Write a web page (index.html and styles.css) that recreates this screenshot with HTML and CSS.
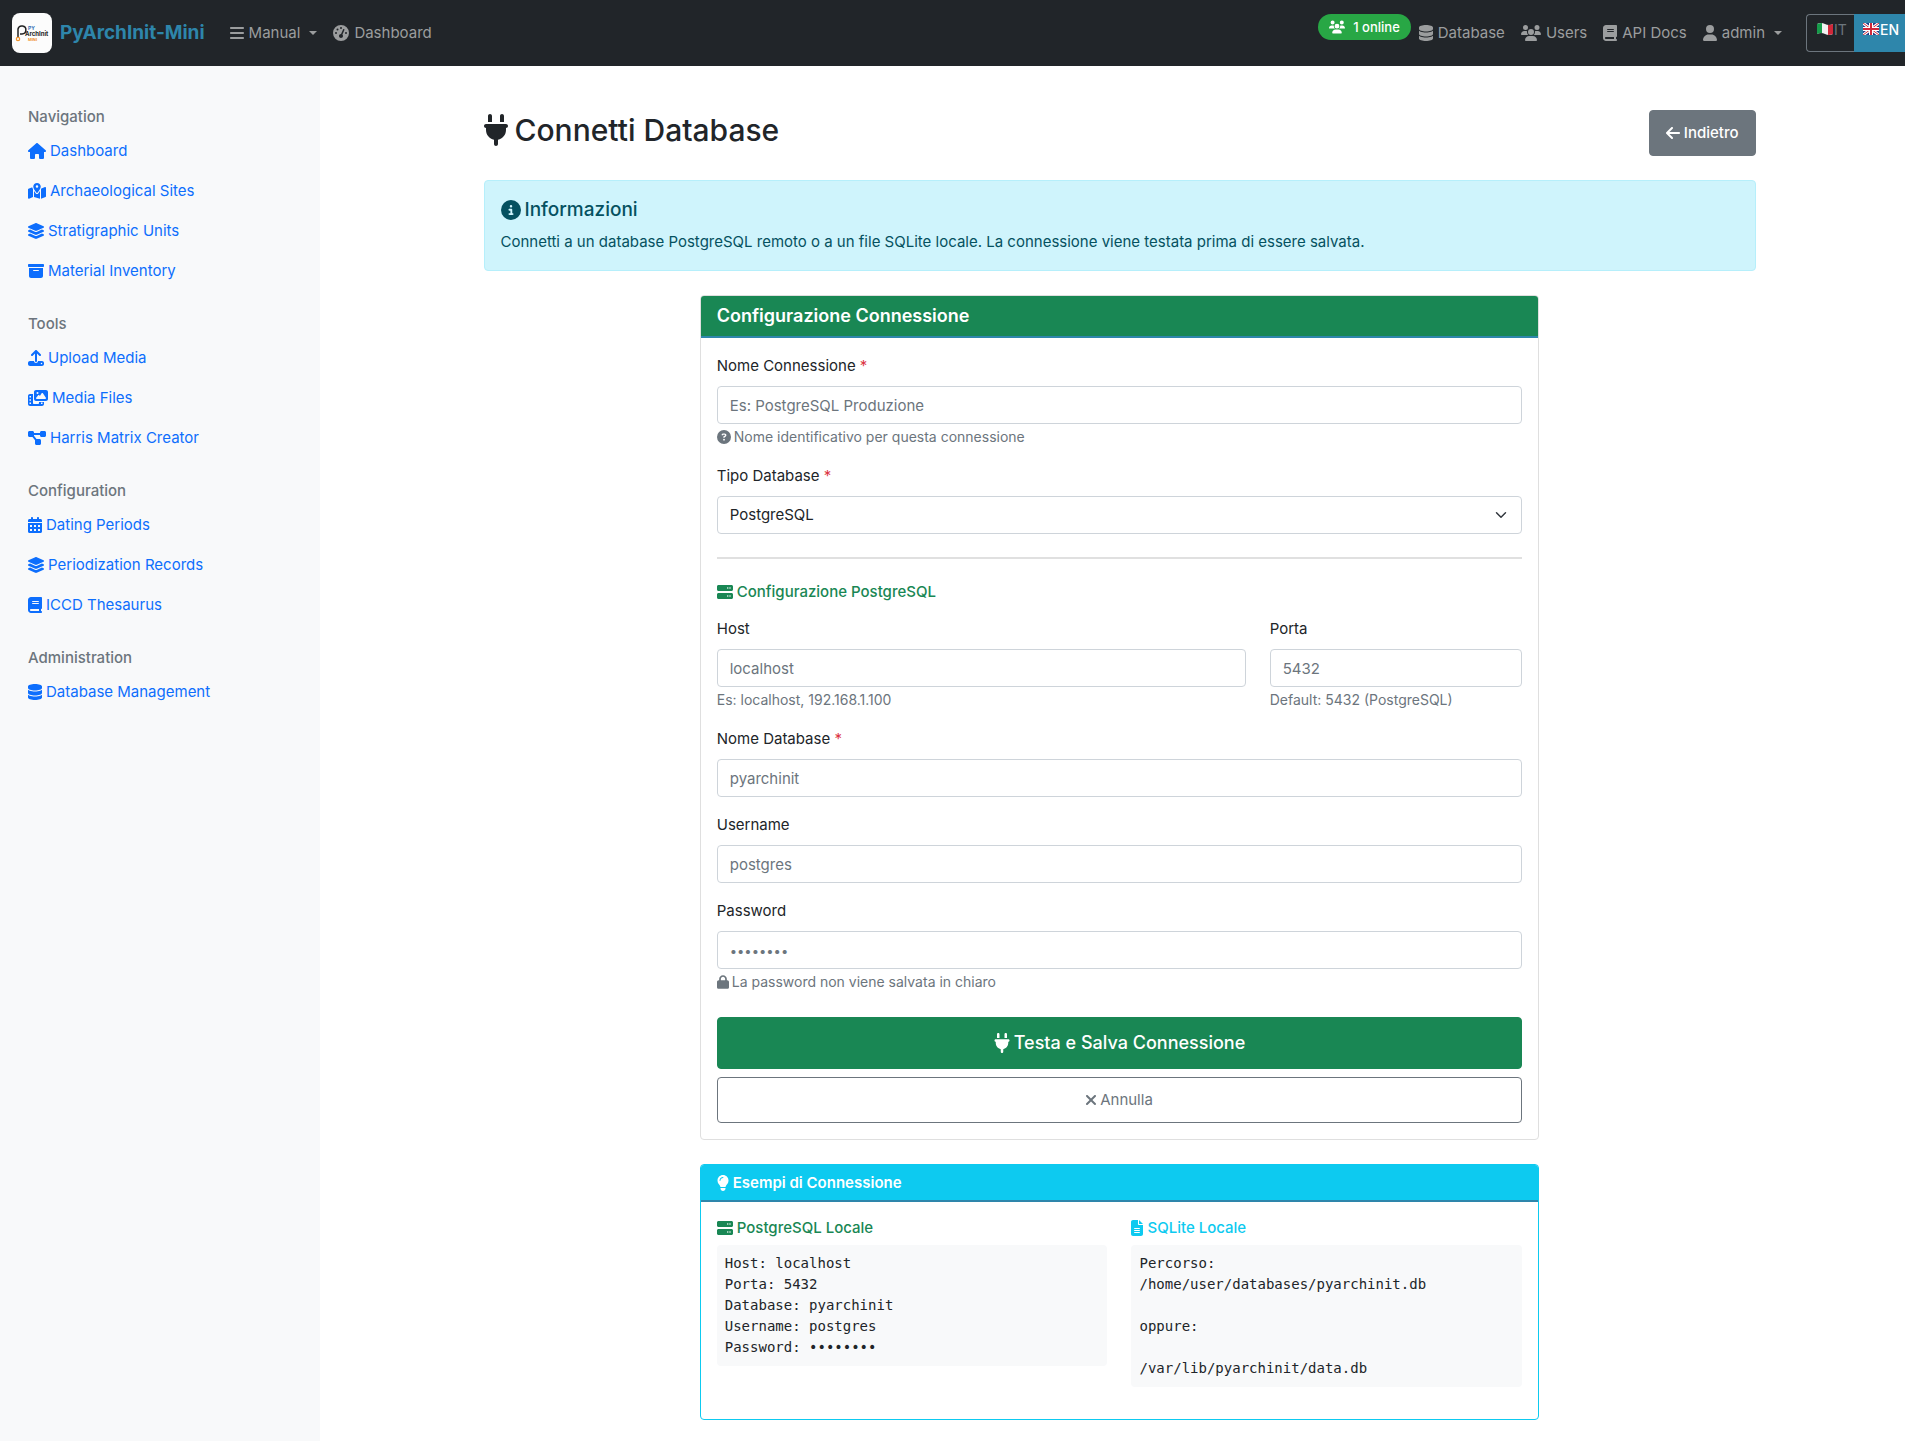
FILE: index.html
```html
<!DOCTYPE html>
<html lang="it">
<head>
<meta charset="utf-8">
<meta name="viewport" content="width=device-width, initial-scale=1">
<title>Connetti Database - PyArchInit-Mini</title>
<link rel="stylesheet" href="styles.css">
</head>
<body>
<svg class="sprite" aria-hidden="true">
  <symbol id="bars" viewBox="0 0 448 512"><path d="M0 96C0 78.3 14.3 64 32 64H416c17.7 0 32 14.3 32 32s-14.3 32-32 32H32C14.3 128 0 113.7 0 96zM0 256c0-17.7 14.3-32 32-32H416c17.7 0 32 14.3 32 32s-14.3 32-32 32H32c-17.7 0-32-14.3-32-32zM448 416c0 17.7-14.3 32-32 32H32c-17.7 0-32-14.3-32-32s14.3-32 32-32H416c17.7 0 32 14.3 32 32z"/></symbol>
  <symbol id="gauge" viewBox="0 0 512 512"><path fill-rule="evenodd" d="M0 256a256 256 0 1 1 512 0A256 256 0 1 1 0 256zM288 96a32 32 0 1 0 -64 0 32 32 0 1 0 64 0zM256 416c35.300 0 64-28.700 64-64c0-17.400-6.900-33.100-18.100-44.600L366 161.700c5.300-12.100-.2-26.300-12.300-31.600s-26.300 .2-31.600 12.300L257.900 288c-.6 0-1.300 0-1.900 0c-35.300 0-64 28.700-64 64s28.700 64 64 64zM176 144a32 32 0 1 0 -64 0 32 32 0 1 0 64 0zM96 288a32 32 0 1 0 0-64 32 32 0 1 0 0 64zm352-32a32 32 0 1 0 -64 0 32 32 0 1 0 64 0z"/></symbol>
  <symbol id="database" viewBox="0 0 448 512"><path d="M448 80v48c0 44.200-100.300 80-224 80S0 172.200 0 128V80C0 35.800 100.300 0 224 0S448 35.800 448 80zM393.200 214.700c20.800-7.400 39.900-16.900 54.800-28.600V288c0 44.200-100.300 80-224 80S0 332.200 0 288V186.100c14.900 11.800 34 21.200 54.800 28.600C99.700 230.700 159.500 240 224 240s124.300-9.300 169.200-25.300zM0 346.100c14.900 11.800 34 21.200 54.800 28.600C99.700 390.700 159.500 400 224 400s124.300-9.300 169.200-25.300c20.800-7.400 39.900-16.900 54.800-28.600V432c0 44.200-100.300 80-224 80S0 476.200 0 432V346.100z"/></symbol>
  <symbol id="users" viewBox="0 0 640 512"><path d="M144 0a80 80 0 1 1 0 160A80 80 0 1 1 144 0zM512 0a80 80 0 1 1 0 160A80 80 0 1 1 512 0zM0 298.700C0 239.800 47.800 192 106.700 192h42.700c15.900 0 31 3.500 44.600 9.700c-1.300 7.200-1.900 14.700-1.900 22.300c0 38.200 16.800 72.500 43.300 96c-.2 0-.4 0-.7 0H21.300C9.600 320 0 310.400 0 298.700zM405.300 320c-.2 0-.4 0-.7 0c26.600-23.500 43.300-57.800 43.300-96c0-7.600-.7-15-1.900-22.300c13.600-6.300 28.700-9.700 44.600-9.700h42.700C592.200 192 640 239.800 640 298.700c0 11.800-9.600 21.300-21.300 21.300H405.300zM224 224a96 96 0 1 1 192 0 96 96 0 1 1 -192 0zM128 485.300C128 411.700 187.700 352 261.300 352H378.700C452.300 352 512 411.700 512 485.300c0 14.700-11.900 26.700-26.700 26.700H154.700c-14.700 0-26.700-11.900-26.700-26.700z"/></symbol>
  <symbol id="book" viewBox="0 0 448 512"><path fill-rule="evenodd" d="M96 0C43 0 0 43 0 96V416c0 53 43 96 96 96H384h32c17.700 0 32-14.300 32-32s-14.300-32-32-32V384c17.700 0 32-14.300 32-32V32c0-17.700-14.300-32-32-32H384 96zm0 384H352v64H96c-17.700 0-32-14.300-32-32s14.300-32 32-32zm32-240c0-8.800 7.200-16 16-16H336c8.800 0 16 7.200 16 16s-7.200 16-16 16H144c-8.800 0-16-7.200-16-16zm16 48H336c8.800 0 16 7.200 16 16s-7.200 16-16 16H144c-8.800 0-16-7.200-16-16s7.200-16 16-16z"/></symbol>
  <symbol id="user" viewBox="0 0 448 512"><path d="M224 256A128 128 0 1 0 224 0a128 128 0 1 0 0 256zm-45.700 48C79.800 304 0 383.800 0 482.300C0 498.700 13.300 512 29.700 512H418.300c16.400 0 29.700-13.300 29.700-29.700C448 383.800 368.200 304 269.700 304H178.300z"/></symbol>
  <symbol id="home" viewBox="0 0 576 512"><path d="M575.800 255.500c0 18-15 32.100-32 32.100h-32l.7 160.200c0 2.700-.2 5.400-.5 8.100V472c0 22.100-17.900 40-40 40H456c-1.100 0-2.200 0-3.300-.1c-1.400 .1-2.800 .1-4.200 .1H416 392c-22.100 0-40-17.900-40-40V448 384c0-17.700-14.300-32-32-32H256c-17.700 0-32 14.300-32 32v64 24c0 22.100-17.900 40-40 40H160 128.100c-1.500 0-3-.1-4.500-.2c-1.200 .1-2.400 .2-3.600 .2H104c-22.100 0-40-17.900-40-40V360c0-.9 0-1.900 .1-2.800V287.600H32c-18 0-32-14-32-32.100c0-9 3-17 10-24L266.400 8c7-7 15-8 22-8s15 2 21 7L564.800 231.500c8 7 12 15 11 24z"/></symbol>
  <symbol id="map" viewBox="0 0 576 512"><path fill-rule="evenodd" d="M408 120c0 54.600-73.100 151.900-105.200 192c-7.700 9.600-22 9.600-29.600 0C241.100 271.900 168 174.600 168 120C168 53.700 221.700 0 288 0s120 53.700 120 120zm8 80.400c3.500-6.900 6.700-13.800 9.600-20.600c.5-1.200 1-2.500 1.500-3.700l116-46.400C558.900 123.400 576 135 576 152V422.800c0 9.800-6 18.600-15.100 22.300L416 503V200.400zM137.600 138.300c2.400 14.100 7.200 28.300 12.800 41.500c2.900 6.800 6.100 13.700 9.600 20.600V451.800L32.900 502.700C17.100 509 0 497.400 0 480.400V209.600c0-9.800 6-18.600 15.100-22.300l122.600-49zM327.800 332c13.900-17.400 35.700-45.700 56.200-77V504.300L192 449.400V255c20.500 31.300 42.300 59.600 56.200 77c20.500 25.600 59.100 25.600 79.600 0zM288 152a40 40 0 1 0 0-80 40 40 0 1 0 0 80z"/></symbol>
  <symbol id="layers" viewBox="32 0 512 512"><path d="M264.500 5.200c14.900-6.900 32.100-6.900 47 0l218.600 101c8.500 3.900 13.900 12.400 13.900 21.800s-5.400 17.900-13.900 21.800l-218.600 101c-14.900 6.900-32.100 6.900-47 0L45.900 149.800C37.400 145.800 32 137.300 32 128s5.400-17.900 13.900-21.800L264.500 5.200zM476.900 209.600l53.200 24.600c8.500 3.900 13.900 12.400 13.900 21.800s-5.400 17.900-13.900 21.800l-218.600 101c-14.900 6.900-32.100 6.900-47 0L45.900 277.800C37.400 273.800 32 265.300 32 256s5.400-17.900 13.900-21.800l53.200-24.600 152 70.200c23.400 10.800 50.400 10.800 73.800 0l152-70.200zm-152 198.200l152-70.200 53.200 24.600c8.500 3.900 13.900 12.400 13.900 21.800s-5.400 17.900-13.900 21.800l-218.600 101c-14.900 6.900-32.100 6.900-47 0L45.900 405.800C37.400 401.800 32 393.300 32 384s5.400-17.900 13.900-21.800l53.200-24.600 152 70.200c23.400 10.800 50.400 10.800 73.800 0z"/></symbol>
  <symbol id="archive" viewBox="0 0 512 512"><path fill-rule="evenodd" d="M32 32H480c17.700 0 32 14.300 32 32V96c0 17.700-14.300 32-32 32H32C14.300 128 0 113.700 0 96V64C0 46.300 14.300 32 32 32zm0 128H480V416c0 35.300-28.700 64-64 64H96c-35.300 0-64-28.700-64-64V160zm128 80c0 8.800 7.200 16 16 16H336c8.800 0 16-7.200 16-16s-7.200-16-16-16H176c-8.800 0-16 7.200-16 16z"/></symbol>
  <symbol id="upload" viewBox="0 0 512 512"><path fill-rule="evenodd" d="M288 109.300V352c0 17.700-14.300 32-32 32s-32-14.300-32-32V109.300l-73.400 73.400c-12.500 12.500-32.800 12.500-45.300 0s-12.500-32.800 0-45.300l128-128c12.500-12.500 32.800-12.500 45.300 0l128 128c12.500 12.500 12.500 32.800 0 45.300s-32.800 12.500-45.300 0L288 109.300zM64 352H192c0 35.300 28.700 64 64 64s64-28.700 64-64H448c35.300 0 64 28.700 64 64v32c0 35.300-28.700 64-64 64H64c-35.300 0-64-28.700-64-64V416c0-35.300 28.700-64 64-64zM432 456a24 24 0 1 0 0-48 24 24 0 1 0 0 48z"/></symbol>
  <symbol id="film" viewBox="0 0 640 512"><path fill-rule="evenodd" d="M256 0H576c35.300 0 64 28.700 64 64V288c0 35.300-28.700 64-64 64H256c-35.300 0-64-28.700-64-64V64c0-35.300 28.700-64 64-64zM476 106.700C471.500 100 464 96 456 96s-15.500 4-20 10.700l-56 84L362.700 169c-4.600-5.700-11.500-9-18.700-9s-14.200 3.300-18.700 9l-64 80c-5.800 7.200-6.900 17.100-2.900 25.400s12.400 13.600 21.600 13.600H552c8.900 0 17-4.900 21.200-12.700s3.700-17.300-1.200-24.600l-96-144zM336 96a32 32 0 1 0 -64 0 32 32 0 1 0 64 0zM64 128h96V384v32c0 17.700 14.300 32 32 32H320c17.700 0 32-14.300 32-32V384H512v64c0 35.300-28.700 64-64 64H64c-35.300 0-64-28.700-64-64V192c0-35.300 28.700-64 64-64zM48 192h48v48H48zM48 296h48v48H48zM48 400h48v48H48zM416 400h48v48h-48z"/></symbol>
  <symbol id="diagram" viewBox="0 0 576 512"><path d="M0 80C0 53.500 21.500 32 48 32h96c26.500 0 48 21.500 48 48V96H384V80c0-26.500 21.500-48 48-48h96c26.500 0 48 21.500 48 48v96c0 26.500-21.500 48-48 48H432c-26.500 0-48-21.500-48-48V160H192v16c0 1.700-.1 3.400-.3 5L272 288h96c26.500 0 48 21.500 48 48v96c0 26.500-21.500 48-48 48H272c-26.500 0-48-21.500-48-48V336c0-1.700 .1-3.400 .3-5L144 224H48c-26.500 0-48-21.500-48-48V80z"/></symbol>
  <symbol id="calendar" viewBox="0 0 448 512"><path fill-rule="evenodd" d="M128 0c17.700 0 32 14.300 32 32V64H288V32c0-17.700 14.300-32 32-32s32 14.300 32 32V64h48c26.500 0 48 21.500 48 48v48H0V112C0 85.500 21.500 64 48 64H96V32c0-17.700 14.300-32 32-32zM0 192H448V464c0 26.500-21.500 48-48 48H48c-26.500 0-48-21.500-48-48V192zm64 64v64h64v-64zm128 0v64h64v-64zm128 0v64h64v-64zM64 384v64h64v-64zm128 0v64h64v-64zm128 0v64h64v-64z"/></symbol>
  <symbol id="plug" viewBox="0 0 384 512"><path d="M96 0C78.300 0 64 14.300 64 32v96h64V32c0-17.700-14.300-32-32-32zM288 0c-17.700 0-32 14.300-32 32v96h64V32c0-17.700-14.300-32-32-32zM32 160c-17.700 0-32 14.300-32 32s14.300 32 32 32v32c0 77.400 55 142 128 156.800V480c0 17.700 14.300 32 32 32s32-14.300 32-32V412.800C297 398 352 333.400 352 256V224c17.700 0 32-14.300 32-32s-14.300-32-32-32H32z"/></symbol>
  <symbol id="info" viewBox="0 0 512 512"><path fill-rule="evenodd" d="M256 512A256 256 0 1 0 256 0a256 256 0 1 0 0 512zM216 336h24V272H216c-13.300 0-24-10.700-24-24s10.700-24 24-24h48c13.300 0 24 10.700 24 24v88h8c13.300 0 24 10.700 24 24s-10.700 24-24 24H216c-13.300 0-24-10.700-24-24s10.700-24 24-24zm40-208a32 32 0 1 1 0 64 32 32 0 1 1 0-64z"/></symbol>
  <symbol id="question" viewBox="0 0 512 512"><path fill-rule="evenodd" d="M256 512A256 256 0 1 0 256 0a256 256 0 1 0 0 512zM169.800 165.300c7.900-22.300 29.100-37.300 52.800-37.300h58.300c34.900 0 63.100 28.300 63.100 63.100c0 22.600-12.100 43.500-31.700 54.800L280 264.400c-.2 13-10.900 23.600-24 23.600c-13.300 0-24-10.700-24-24V250.500c0-8.600 4.600-16.500 12.100-20.800l44.300-25.400c4.700-2.700 7.600-7.700 7.600-13.100c0-8.400-6.800-15.100-15.100-15.100H222.600c-3.400 0-6.400 2.100-7.500 5.300l-.4 1.200c-4.400 12.500-18.200 19-30.600 14.600s-19-18.200-14.600-30.600l.4-1.200zM224 352a32 32 0 1 1 64 0 32 32 0 1 1 -64 0z"/></symbol>
  <symbol id="server" viewBox="0 0 512 512"><path fill-rule="evenodd" d="M48 32C21 32 0 53 0 80v96c0 27 21 48 48 48H464c27 0 48-21 48-48V80c0-27-21-48-48-48zm296 72a24 24 0 1 1 0 48 24 24 0 1 1 0-48zm72 0a24 24 0 1 1 0 48 24 24 0 1 1 0-48zM48 288c-27 0-48 21-48 48v96c0 27 21 48 48 48H464c27 0 48-21 48-48V336c0-27-21-48-48-48zm296 72a24 24 0 1 1 0 48 24 24 0 1 1 0-48zm72 0a24 24 0 1 1 0 48 24 24 0 1 1 0-48z"/></symbol>
  <symbol id="lock" viewBox="0 0 448 512"><path fill-rule="evenodd" d="M144 144v48H304V144c0-44.200-35.800-80-80-80s-80 35.800-80 80zM80 192V144C80 64.500 144.500 0 224 0s144 64.500 144 144v48h16c35.300 0 64 28.700 64 64V448c0 35.300-28.700 64-64 64H64c-35.300 0-64-28.700-64-64V256c0-35.300 28.700-64 64-64H80z"/></symbol>
  <symbol id="bulb" viewBox="0 0 384 512"><path fill-rule="evenodd" d="M272 384c9.600-31.900 29.500-59.100 49.200-86.200c5.200-7.100 10.400-14.200 15.400-21.400c19.800-28.500 31.400-63 31.400-100.300C368 78.800 289.200 0 192 0S16 78.800 16 176c0 37.300 11.600 71.900 31.400 100.300c5 7.200 10.200 14.300 15.400 21.400c19.800 27.100 39.700 54.400 49.200 86.200H272zM192 512c44.200 0 80-35.800 80-80V416H112v16c0 44.200 35.800 80 80 80zM112 176c0 8.800-7.200 16-16 16s-16-7.200-16-16c0-61.900 50.100-112 112-112c8.800 0 16 7.200 16 16s-7.200 16-16 16c-44.200 0-80 35.800-80 80z"/></symbol>
  <symbol id="file" viewBox="0 0 384 512"><path fill-rule="evenodd" d="M64 0C28.700 0 0 28.700 0 64V448c0 35.300 28.700 64 64 64H320c35.300 0 64-28.700 64-64V160H256c-17.700 0-32-14.300-32-32V0H64zM256 0V128H384L256 0zM112 256H272c8.800 0 16 7.200 16 16s-7.200 16-16 16H112c-8.800 0-16-7.200-16-16s7.200-16 16-16zm0 64H272c8.800 0 16 7.200 16 16s-7.200 16-16 16H112c-8.800 0-16-7.200-16-16s7.200-16 16-16zm0 64H272c8.800 0 16 7.200 16 16s-7.200 16-16 16H112c-8.800 0-16-7.200-16-16s7.200-16 16-16z"/></symbol>
  <symbol id="xmark" viewBox="32 0 320 512"><path d="M342.600 150.600c12.500-12.500 12.500-32.800 0-45.300s-32.800-12.500-45.300 0L192 210.700 86.600 105.400c-12.500-12.500-32.800-12.500-45.300 0s-12.500 32.800 0 45.300L146.700 256 41.400 361.400c-12.500 12.500-12.500 32.800 0 45.300s32.800 12.500 45.300 0L192 301.300 297.400 406.600c12.500 12.500 32.800 12.500 45.300 0s12.500-32.800 0-45.300L237.300 256 342.600 150.600z"/></symbol>
  <symbol id="arrow" viewBox="0 0 448 512"><path d="M9.400 233.400c-12.500 12.500-12.500 32.800 0 45.300l160 160c12.500 12.500 32.800 12.500 45.300 0s12.500-32.800 0-45.300L109.200 288 416 288c17.700 0 32-14.300 32-32s-14.300-32-32-32l-306.700 0L214.600 118.600c12.500-12.500 12.500-32.800 0-45.300s-32.800-12.500-45.300 0l-160 160z"/></symbol>
</svg>

<header class="navbar">
  <a class="brand" href="#">
    <svg class="logo" viewBox="0 0 40 40" aria-hidden="true">
      <rect width="40" height="40" rx="8" fill="#fcfcfc"/>
      <path d="M6 24V16a4 4 0 1 1 4 5H8" fill="none" stroke="#222" stroke-width="1.500"/>
      <circle cx="6" cy="26" r="1.700" fill="none" stroke="#f0932b" stroke-width="1.200"/>
      <text x="16" y="17" class="logo-py">PY</text>
      <text x="13" y="23" class="logo-arch">ArchInit</text>
      <text x="16" y="28" class="logo-mini">MINI</text>
    </svg>
    <span>PyArchInit-Mini</span>
  </a>
  <nav class="menu" aria-label="Principale">
    <a class="caret" href="#"><svg class="i14"><use href="#bars"/></svg>Manual</a>
    <a href="#"><svg class="i16"><use href="#gauge"/></svg>Dashboard</a>
  </nav>
  <nav class="menu menu-end" aria-label="Account">
    <span class="online"><svg class="i16"><use href="#users"/></svg>1 online</span>
    <a href="#"><svg class="i14"><use href="#database"/></svg>Database</a>
    <a href="#"><svg class="i20"><use href="#users"/></svg>Users</a>
    <a href="#"><svg class="i14"><use href="#book"/></svg>API Docs</a>
    <a class="caret" href="#"><svg class="i14"><use href="#user"/></svg>admin</a>
    <div class="lang">
      <a href="#"><svg class="flag" viewBox="0 0 16 12"><path fill="#f1f1f1" d="M0 1q4-2 8 0t8 0v10q-4 2-8 0t-8 0z"/><path fill="#169b4a" d="M0 1q3-1 5-1v10q-3 0-5 1z"/><path fill="#d0283a" d="M11 2q3 0 5-1v10q-3 1-5 1z"/></svg>IT</a>
      <a class="active" href="#"><svg class="flag" viewBox="0 0 16 12"><path fill="#223a86" d="M0 0h16v12H0z"/><path stroke="#fff" stroke-width="3" d="M0 0l16 12M16 0L0 12"/><path stroke="#d0283a" d="M0 0l16 12M16 0L0 12"/><path stroke="#fff" stroke-width="4" d="M8 0v12M0 6h16"/><path stroke="#d0283a" stroke-width="2" d="M8 0v12M0 6h16"/></svg>EN</a>
    </div>
  </nav>
</header>

<div class="page">
  <aside class="sidebar">
    <section>
      <h6>Navigation</h6>
      <a href="#"><svg class="i18"><use href="#home"/></svg>Dashboard</a>
      <a href="#"><svg class="i18"><use href="#map"/></svg>Archaeological Sites</a>
      <a href="#"><svg class="i16"><use href="#layers"/></svg>Stratigraphic Units</a>
      <a href="#"><svg class="i16"><use href="#archive"/></svg>Material Inventory</a>
    </section>
    <section>
      <h6>Tools</h6>
      <a href="#"><svg class="i16"><use href="#upload"/></svg>Upload Media</a>
      <a href="#"><svg class="i20"><use href="#film"/></svg>Media Files</a>
      <a href="#"><svg class="i18"><use href="#diagram"/></svg>Harris Matrix Creator</a>
    </section>
    <section>
      <h6>Configuration</h6>
      <a href="#"><svg class="i14"><use href="#calendar"/></svg>Dating Periods</a>
      <a href="#"><svg class="i16"><use href="#layers"/></svg>Periodization Records</a>
      <a href="#"><svg class="i14"><use href="#book"/></svg>ICCD Thesaurus</a>
    </section>
    <section>
      <h6>Administration</h6>
      <a href="#"><svg class="i14"><use href="#database"/></svg>Database Management</a>
    </section>
  </aside>

  <main class="main">
    <div class="container">
      <div class="title-row">
        <h1><svg class="plug-lg"><use href="#plug"/></svg>Connetti Database</h1>
        <a class="btn btn-secondary" href="#"><svg class="i14"><use href="#arrow"/></svg>Indietro</a>
      </div>

      <div class="alert">
        <h2><svg class="i20 tall"><use href="#info"/></svg>Informazioni</h2>
        <p>Connetti a un database PostgreSQL remoto o a un file SQLite locale. La connessione viene testata prima di essere salvata.</p>
      </div>

      <div class="column">
        <section class="card">
          <h2 class="card-header">Configurazione Connessione</h2>
          <form class="card-body">
            <div class="field">
              <label for="name">Nome Connessione <span class="req">*</span></label>
              <input id="name" type="text" placeholder="Es: PostgreSQL Produzione">
              <small><svg class="i14 short"><use href="#question"/></svg>Nome identificativo per questa connessione</small>
            </div>
            <div class="field">
              <label for="type">Tipo Database <span class="req">*</span></label>
              <select id="type"><option>PostgreSQL</option><option>SQLite</option></select>
            </div>
            <hr>
            <h3 class="green"><svg class="i16"><use href="#server"/></svg>Configurazione PostgreSQL</h3>
            <div class="row host-row">
              <div class="field">
                <label for="host">Host</label>
                <input id="host" type="text" placeholder="localhost">
                <small>Es: localhost, 192.168.1.100</small>
              </div>
              <div class="field">
                <label for="port">Porta</label>
                <input id="port" type="text" inputmode="numeric" placeholder="5432">
                <small>Default: 5432 (PostgreSQL)</small>
              </div>
            </div>
            <div class="field">
              <label for="db">Nome Database <span class="req">*</span></label>
              <input id="db" type="text" placeholder="pyarchinit">
            </div>
            <div class="field">
              <label for="username">Username</label>
              <input id="username" type="text" placeholder="postgres">
            </div>
            <div class="field">
              <label for="password">Password</label>
              <input id="password" type="password" placeholder="••••••••">
              <small><svg class="i12 short"><use href="#lock"/></svg>La password non viene salvata in chiaro</small>
            </div>
            <div class="actions">
              <button class="btn btn-success" type="submit"><svg class="i16 tall"><use href="#plug"/></svg>Testa e Salva Connessione</button>
              <button class="btn btn-outline" type="button"><svg class="i10"><use href="#xmark"/></svg>Annulla</button>
            </div>
          </form>
        </section>

        <section class="card card-info">
          <h2 class="card-header"><svg class="i12"><use href="#bulb"/></svg>Esempi di Connessione</h2>
          <div class="card-body">
            <div class="row">
              <div>
                <h3 class="green"><svg class="i16"><use href="#server"/></svg>PostgreSQL Locale</h3>
                <pre>Host: localhost
Porta: 5432
Database: pyarchinit
Username: postgres
Password: ••••••••</pre>
              </div>
              <div>
                <h3 class="cyan"><svg class="i12"><use href="#file"/></svg>SQLite Locale</h3>
                <pre>Percorso:
/home/user/databases/pyarchinit.db

oppure:

/var/lib/pyarchinit/data.db</pre>
              </div>
            </div>
          </div>
        </section>
      </div>
    </div>
  </main>
</div>
</body>
</html>
```
FILE: styles.css
```css
*, *::before, *::after { box-sizing: border-box; }

body {
  margin: 0;
  font-family: Inter, "Liberation Sans", sans-serif;
  font-size: 15px;
  line-height: 24px;
  color: #212529;
  background: #fff;
}

h1, h2, h3, h6, p, pre { margin: 0; font-weight: 500; }
a { text-decoration: none; }

/* Icons */
.sprite { display: none; }
svg { flex: none; height: 16px; fill: currentColor; }
.i10 { width: 10px; }
.i12 { width: 12px; }
.i14 { width: 14px; }
.i16 { width: 16px; }
.i18 { width: 18px; }
.i20 { width: 20px; }
svg.tall { height: 20px; }
svg.short { height: 14px; }

/* Navbar */
.navbar {
  display: flex;
  align-items: center;
  height: 66px;
  padding-left: 12px;
  background: #212529;
  overflow: hidden;
  white-space: nowrap;
}
.brand {
  display: flex;
  align-items: center;
  gap: 8px;
  margin-right: 25px;
  color: #2e86ab;
  font-size: 19px;
  font-weight: 700;
}
.logo { width: 40px; height: 40px; }
.logo text { font-weight: 700; }
.logo-py { font-size: 5px; fill: #2f6fb5; }
.logo-arch { font-size: 6px; fill: #222; }
.logo-mini { font-size: 4px; fill: #f0932b; }
.menu { display: flex; align-items: center; gap: 16px; }
.menu a {
  display: flex;
  align-items: center;
  gap: 5px;
  color: #9b9d9e;
}
.caret::after {
  content: "";
  margin-left: 4px;
  border: 4px solid transparent;
  border-top-color: currentColor;
  border-bottom: 0;
}
.menu-end { margin-left: auto; }
.online {
  display: flex;
  align-items: center;
  align-self: flex-start;
  gap: 8px;
  height: 26px;
  padding: 0 11px;
  margin-right: -8px;
  border-radius: 13px;
  background: #28a745;
  color: #fff;
  font-size: 13px;
  font-weight: 500;
}
.online svg { height: 14px; }
.lang { display: flex; height: 38px; margin-left: 8px; font-size: 14px; }
.menu .lang a {
  align-items: flex-start;
  gap: 1px;
  width: 48px;
  padding: 4px 10px;
  border: 1px solid #6c757d;
  border-right: 0;
  border-radius: 4px 0 0 4px;
  color: #6c757d;
  line-height: 21px;
}
.menu .lang .active {
  width: 51px;
  padding: 4px 8px;
  border-color: #2e86ab;
  border-radius: 0;
  background: #2e86ab;
  color: #fff;
  font-weight: 500;
}
.flag { width: 16px; height: 12px; margin-top: 4px; }

/* Sidebar */
.page { display: flex; min-height: calc(100vh - 66px); }
.sidebar {
  flex: none;
  width: 320px;
  padding: 41px 28px;
  background: #f8f9fa;
}
.sidebar section { margin-bottom: 23px; }
.sidebar h6 {
  margin-bottom: 5px;
  color: #6c757d;
  font-size: 15px;
  line-height: 19px;
}
.sidebar a {
  display: flex;
  align-items: center;
  gap: 4px;
  height: 40px;
  color: #0d6efd;
}

/* Main */
.main { flex: 1; min-width: 0; padding: 44px 24px 16px 38px; }
.container { max-width: 1272px; margin: 0 auto; }
.title-row {
  display: flex;
  justify-content: space-between;
  margin-bottom: 24px;
}
h1 {
  display: flex;
  align-items: center;
  gap: 7px;
  height: 40px;
  font-size: 30px;
}
.plug-lg { width: 24px; height: 32px; }

.btn {
  display: flex;
  align-items: center;
  justify-content: center;
  gap: 4px;
  height: 46px;
  padding: 0 16px;
  border: 1px solid;
  border-radius: 4px;
  font: inherit;
}
.btn-secondary { border-color: #6c757d; background: #6c757d; color: #fff; font-weight: 500; }
.btn-success {
  height: 52px;
  border-color: #198754;
  background: #198754;
  color: #fff;
  font-size: 18px;
  font-weight: 500;
}
.btn-outline { border-color: #6c757d; background: #fff; color: #6c757d; }

.alert {
  padding: 16px;
  margin-bottom: 24px;
  border: 1px solid #b6effb;
  border-radius: 4px;
  background: #cff4fc;
  color: #055160;
}
.alert h2 {
  display: flex;
  align-items: center;
  gap: 4px;
  margin-bottom: 8px;
  font-size: 19px;
  line-height: 25px;
}
.alert p { font-weight: 400; }

/* Cards */
.column { width: 66%; margin: 0 auto; }
.card {
  margin-bottom: 24px;
  border: 1px solid #dfdfdf;
  border-radius: 4px;
  overflow: hidden;
}
.card:last-child { margin-bottom: 0; }
.card-header {
  padding: 8px 16px;
  border-bottom: 2px solid #2e86ab;
  background: #198754;
  color: #fff;
  font-size: 18px;
  font-weight: 600;
}
.card-body { padding: 16px; }
.card-info { border-color: #0dcaf0; }
.card-info .card-header {
  display: flex;
  align-items: center;
  gap: 4px;
  background: #0dcaf0;
  font-size: 15px;
  line-height: 19px;
}
h3 {
  display: flex;
  align-items: center;
  gap: 4px;
  font-size: 15px;
  line-height: 19px;
}
.green { color: #198754; }
.cyan { color: #0dcaf0; }

/* Form */
.field { margin-bottom: 16px; }
label { display: block; margin-bottom: 8px; }
.req { color: #dc3545; }
input, select {
  display: block;
  width: 100%;
  height: 38px;
  padding: 0 12px;
  border: 1px solid #ced4da;
  border-radius: 4px;
  background: #fff;
  color: #212529;
  font: inherit;
}
select {
  appearance: none;
  background: #fff url("data:image/svg+xml,%3Csvg xmlns='http://www.w3.org/2000/svg' viewBox='0 0 16 16'%3E%3Cpath fill='none' stroke='%23343a40' stroke-linecap='round' stroke-linejoin='round' stroke-width='2' d='M2 5l6 6 6-6'/%3E%3C/svg%3E") no-repeat right 14px center / 12px 12px;
}
input::placeholder { color: #6c757d; opacity: 1; }
input[type="password"]::placeholder { font-size: 13px; }
small {
  display: flex;
  align-items: center;
  gap: 3px;
  margin-top: 2px;
  color: #6c757d;
  font-size: 14px;
  line-height: 22px;
}
hr { height: 2px; margin: 23px 0; border: 0; background: #e0e0e0; }
form h3 { margin-bottom: 16px; }
.row {
  display: grid;
  grid-template-columns: 1fr 1fr;
  align-items: start;
  margin: 0 -12px;
}
.row > div { padding: 0 12px; }
.host-row { grid-template-columns: 2fr 1fr; }
.actions { display: grid; gap: 8px; margin-top: 24px; }

pre {
  padding: 8px;
  margin: 8px 0 16px;
  border-radius: 4px;
  background: #f8f9fa;
  font: 14px/21px "DejaVu Sans Mono", monospace;
}
```
